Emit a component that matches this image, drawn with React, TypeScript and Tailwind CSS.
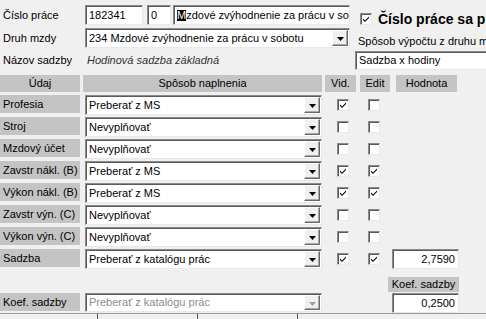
import React from 'react'

type Row = {
  label: string
  method: string
  vid: boolean
  edit: boolean
  value?: string
}

const rows: Row[] = [
  { label: 'Profesia', method: 'Preberať z MS', vid: true, edit: false },
  { label: 'Stroj', method: 'Nevyplňovať', vid: false, edit: false },
  { label: 'Mzdový účet', method: 'Nevyplňovať', vid: false, edit: false },
  { label: 'Zavstr nákl. (B)', method: 'Preberať z MS', vid: true, edit: true },
  { label: 'Výkon nákl. (B)', method: 'Preberať z MS', vid: true, edit: true },
  { label: 'Zavstr výn. (C)', method: 'Nevyplňovať', vid: false, edit: false },
  { label: 'Výkon výn. (C)', method: 'Nevyplňovať', vid: false, edit: false },
  { label: 'Sadzba', method: 'Preberať z katalógu prác', vid: true, edit: true, value: '2,7590' },
]

const sunken =
  'border border-t-[#8a8a8a] border-l-[#8a8a8a] border-r-[#e8e8e8] border-b-[#e8e8e8] shadow-[inset_1px_1px_0_#5a5a5a] bg-white'

function Check({ checked }: { checked: boolean }) {
  return (
    <div className={`w-[12px] h-[12px] shrink-0 flex items-center justify-center ${sunken}`}>
      {checked && (
        <svg width="8" height="8" viewBox="0 0 8 8">
          <path d="M1 3.5 L3 5.5 L7 1.5 L7 3 L3 7 L1 5 Z" fill="#000" />
        </svg>
      )}
    </div>
  )
}

function Combo({ text, width, disabled }: { text: string; width: string; disabled?: boolean }) {
  return (
    <div className={`${width} h-[20px] shrink-0 flex items-stretch ${sunken}`}>
      <span className={`flex-1 flex items-center pl-[3px] whitespace-nowrap overflow-hidden ${disabled ? 'text-[#8c8c8c]' : ''}`}>
        {text}
      </span>
      <div className="w-[16px] my-px mr-px flex items-center justify-center bg-[#f0f0f0] border border-t-white border-l-white border-r-[#6a6a6a] border-b-[#6a6a6a] shadow-[inset_-1px_-1px_0_#a8a8a8]">
        <svg width="7" height="4" viewBox="0 0 7 4" className="mt-[2px]">
          <path d="M0 0 H7 L3.5 4 Z" fill={disabled ? '#a0a0a0' : '#000'} />
        </svg>
      </div>
    </div>
  )
}

function Cell({ children, width, className = '' }: { children: React.ReactNode; width: string; className?: string }) {
  return (
    <div className={`${width} h-[20px] shrink-0 flex items-center px-[3px] whitespace-nowrap overflow-hidden ${sunken} ${className}`}>
      {children}
    </div>
  )
}

export default function App() {
  return (
    <div className="w-[486px] h-[319px] overflow-hidden bg-[#f0f0f0] text-black text-[11px] leading-none font-['Liberation_Sans',Arial,sans-serif] flex flex-col">
      {/* hlavička */}
      <div className="mt-[5px] h-[20px] flex items-start">
        <div className="w-[85px] h-[20px] pl-[3px] flex items-center shrink-0">Číslo práce</div>
        <Cell width="w-[58px]">182341</Cell>
        <Cell width="w-[24px] ml-[4px]">0</Cell>
        <Cell width="w-[177px] ml-[2px]">
          <span className="bg-black text-white">M</span>zdové zvýhodnenie za prácu v sobotu
        </Cell>
        <div className="ml-[10px] mt-[7px] flex items-center shrink-0">
          <Check checked />
          <span className="ml-[6px] text-[14px] font-bold whitespace-nowrap">Číslo práce sa prideľuje automaticky</span>
        </div>
      </div>

      <div className="mt-[3px] h-[20px] flex items-stretch">
        <div className="w-[85px] pl-[3px] flex items-center shrink-0">Druh mzdy</div>
        <Combo width="w-[265px]" text="234 Mzdové zvýhodnenie za prácu v sobotu" />
        <div className="ml-[8px] flex items-end pb-px whitespace-nowrap shrink-0">Spôsob výpočtu z druhu mzdy</div>
      </div>

      <div className="mt-[3px] h-[19px] flex items-stretch">
        <div className="w-[85px] pl-[3px] flex items-center shrink-0">Názov sadzby</div>
        <div className="w-[270px] pl-[2px] flex items-center italic text-[#303030] shrink-0">Hodinová sadzba základná</div>
        <Cell width="w-[140px] !h-[19px]">Sadzba x hodiny</Cell>
      </div>

      {/* tabuľka */}
      <div className="mt-[5px] h-[17px] flex">
        <div className="w-[80px] bg-[#c4c4c4] flex items-center justify-center shrink-0">Údaj</div>
        <div className="w-[239px] ml-[3px] bg-[#c4c4c4] flex items-center justify-center shrink-0">Spôsob naplnenia</div>
        <div className="w-[31px] ml-[3px] bg-[#c4c4c4] flex items-center justify-center shrink-0">Vid.</div>
        <div className="w-[30px] ml-[4px] bg-[#c4c4c4] flex items-center justify-center shrink-0">Edit</div>
        <div className="w-[61px] ml-[6px] bg-[#c4c4c4] flex items-center justify-center shrink-0">Hodnota</div>
      </div>

      <div className="mt-[3px] flex flex-col gap-[2px]">
        {rows.map((r) => (
          <div key={r.label} className="h-[20px] flex items-start">
            <div className="w-[80px] h-[18px] bg-[#c4c4c4] pl-[3px] flex items-center whitespace-nowrap shrink-0">{r.label}</div>
            <div className="ml-[5px]">
              <Combo width="w-[237px]" text={r.method} />
            </div>
            <div className="ml-[15px] h-[20px] flex items-center">
              <Check checked={r.vid} />
            </div>
            <div className="ml-[19px] h-[20px] flex items-center">
              <Check checked={r.edit} />
            </div>
            {r.value && (
              <Cell width="w-[67px] ml-[12px]" className="justify-end">
                {r.value}
              </Cell>
            )}
          </div>
        ))}
      </div>

      <div className="mt-[8px] h-[15px] flex">
        <div className="ml-[388px] w-[71px] bg-[#c4c4c4] flex items-center justify-center whitespace-nowrap">Koef. sadzby</div>
      </div>

      <div className="mt-px h-[20px] flex items-start">
        <div className="w-[80px] h-[18px] bg-[#c4c4c4] pl-[3px] flex items-center whitespace-nowrap shrink-0">Koef. sadzby</div>
        <div className="ml-[5px]">
          <Combo width="w-[237px] !h-[19px]" text="Preberať z katalógu prác" disabled />
        </div>
        <Cell width="w-[67px] ml-[70px]" className="justify-end">
          0,2500
        </Cell>
      </div>

      <div className="flex h-[6px] border-t border-[#9a9a9a]">
        <div className="w-[98px] border-r border-[#505050]" />
        <div className="w-[100px] border-r border-[#505050]" />
        <div className="w-[100px] border-r border-[#505050]" />
      </div>
    </div>
  )
}
